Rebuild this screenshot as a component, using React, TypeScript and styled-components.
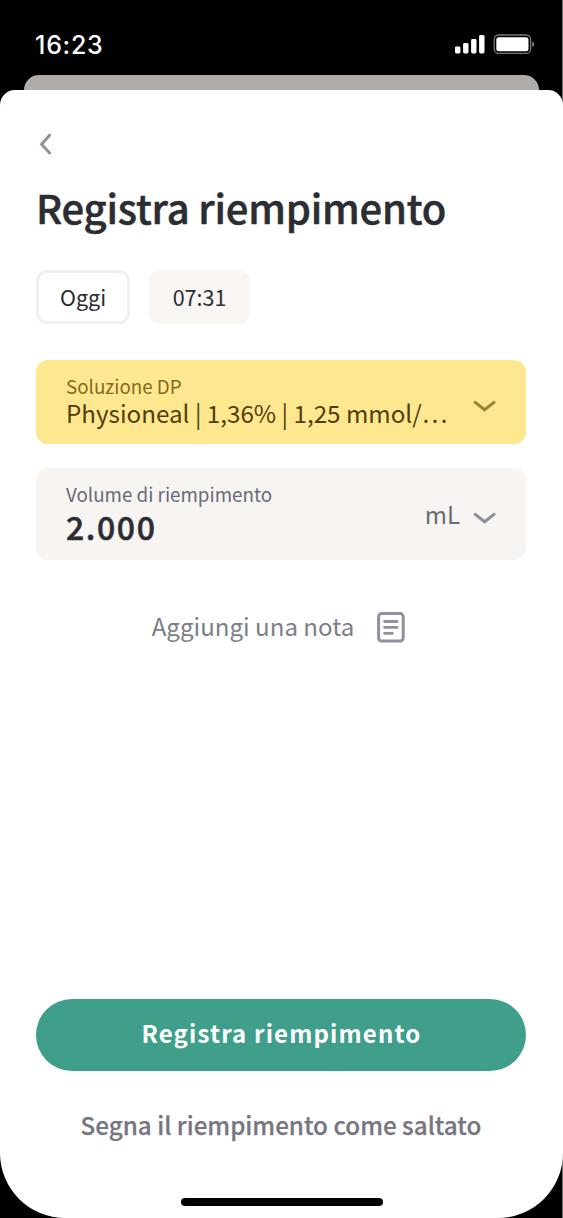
import React from "react";
import styled, { createGlobalStyle } from "styled-components";

const GlobalStyle = createGlobalStyle`
  * { box-sizing: border-box; }
  body { margin: 0; background: #000; }
  button { border: 0; margin: 0; padding: 0; background: none; font: inherit; color: inherit; }
`;

const Screen = styled.div`
  width: 563px;
  height: 1218px;
  display: flex;
  flex-direction: column;
  background: linear-gradient(to right, #000 562px, #6e6e6e 562px);
  overflow: hidden;
  font-family: "Noto Sans CJK SC", "Noto Sans", sans-serif;
  color: #2b2d33;
`;

const StatusBar = styled.header`
  height: 75px;
  flex: none;
  display: flex;
  align-items: flex-start;
  justify-content: space-between;
  padding: 30px 28px 0 35px;
`;

const Clock = styled.time`
  font: 500 25px/31px Inter, sans-serif;
  letter-spacing: 0.75px;
  color: #fff;
`;

const StatusIcons = styled.svg`
  display: block;
  margin-top: 4px;
`;

const BackSheet = styled.div`
  height: 15px;
  flex: none;
  margin: 0 24.5px 0 24px;
  border-radius: 15px 15px 0 0;
  background: #afacaa;
`;

const Sheet = styled.main`
  flex: 1;
  display: flex;
  flex-direction: column;
  padding: 43px 37px 0 36px;
  border-radius: 15px 15px 65px 65px;
  background: #fff;
`;

const BackButton = styled.button`
  width: 20px;
  height: 22px;
  display: block;
`;

const Title = styled.h1`
  margin: 28px 0 0;
  font-size: 40px;
  line-height: 48px;
  font-weight: 500;
  letter-spacing: -0.2px;
  -webkit-text-stroke: 0.5px currentColor;
  white-space: nowrap;
`;

const ChipRow = styled.div`
  display: flex;
  gap: 19px;
  margin-top: 39px;
`;

const Chip = styled.button<{ $filled?: boolean; $width: number }>`
  width: ${(p) => p.$width}px;
  height: 54px;
  border: 3px solid ${(p) => (p.$filled ? "#f8f5f2" : "#f1f0f0")};
  border-radius: 11px;
  background: ${(p) => (p.$filled ? "#f8f5f2" : "#fff")};
  font-size: 21.5px;
  line-height: 48px;
`;

const Field = styled.section<{ $tone: "yellow" | "neutral" }>`
  display: flex;
  align-items: center;
  justify-content: space-between;
  padding: 0 30px;
  border-radius: 12px;
  height: ${(p) => (p.$tone === "yellow" ? 84 : 92)}px;
  margin-top: ${(p) => (p.$tone === "yellow" ? 36 : 24)}px;
  background: ${(p) => (p.$tone === "yellow" ? "#fee88f" : "#f7f4f2")};
  color: ${(p) => (p.$tone === "yellow" ? "#543c0c" : "#2b2d33")};
`;

const FieldText = styled.div<{ $lift?: number }>`
  display: flex;
  flex-direction: column;
  padding-bottom: ${(p) => p.$lift ?? 0}px;
`;

const Label = styled.span<{ $color: string }>`
  font-size: 18.8px;
  line-height: 24px;
  white-space: nowrap;
  color: ${(p) => p.$color};
`;

const Solution = styled.span`
  font-size: 24.2px;
  line-height: 30px;
  white-space: nowrap;
`;

const Volume = styled.span`
  font-size: 32px;
  line-height: 40px;
  font-weight: 500;
  letter-spacing: 1.6px;
  -webkit-text-stroke: 0.5px currentColor;
`;

const Unit = styled.div`
  display: flex;
  align-items: center;
  gap: 13px;
  font-size: 24px;
  line-height: 30px;
  color: #696a78;
`;

const NoteButton = styled.button`
  display: flex;
  align-items: center;
  justify-content: center;
  gap: 23px;
  height: 36px;
  margin-top: 49px;
  padding-right: 5px;
  padding-bottom: 2px;
  font-size: 24.1px;
  line-height: 34px;
  color: #7d7e88;
  white-space: nowrap;
`;

const NoteIcon = styled.svg`
  display: block;
  margin-top: 2px;
`;

const Actions = styled.footer`
  display: flex;
  flex-direction: column;
  align-items: center;
  margin-top: auto;
`;

const PrimaryButton = styled.button`
  width: 100%;
  height: 72px;
  padding: 0 0 5px 1px;
  border-radius: 36px;
  background: #3f9f8a;
  color: #fff;
  font-size: 24px;
  line-height: 67px;
  font-weight: 700;
  letter-spacing: 1.15px;
`;

const SkipButton = styled.button`
  margin-top: 36px;
  font-size: 24.2px;
  line-height: 36px;
  font-weight: 500;
  color: #777681;
  -webkit-text-stroke: 0.25px currentColor;
  white-space: nowrap;
`;

const HomeIndicator = styled.div`
  width: 202px;
  height: 8px;
  margin: 55px 0 12px 2px;
  border-radius: 4px;
  background: #000;
`;

const ChevronIcon = styled.svg`
  display: block;
  flex: none;
  margin-top: 8px;
`;

const Chevron = ({ color }: { color: string }) => (
  <ChevronIcon width="23" height="13" viewBox="0 0 23 13" fill="none">
    <path d="M2.2 2.4 L11.6 9.8 L21 2.4" stroke={color} strokeWidth="3" strokeLinecap="round" />
  </ChevronIcon>
);

export default function App() {
  return (
    <Screen>
      <GlobalStyle />
      <StatusBar>
        <Clock>16:23</Clock>
        <StatusIcons width="80" height="21" viewBox="0 0 80 21" fill="#fff">
          <rect x="0" y="12.5" width="5.4" height="7" rx="1.4" />
          <rect x="8.1" y="9" width="5.4" height="10.5" rx="1.4" />
          <rect x="16.1" y="5" width="5.4" height="14.5" rx="1.4" />
          <rect x="24.1" y="1" width="5.4" height="18.5" rx="1.4" />
          <rect x="39.2" y="1" width="36.4" height="18.4" rx="4.5" fill="none" stroke="#777" strokeWidth="1.3" />
          <rect x="41.3" y="3.2" width="32.2" height="14" rx="2.5" />
          <path d="M77.2 7.2 a3.2 3.2 0 0 1 0 6 Z" fill="#777" />
        </StatusIcons>
      </StatusBar>
      <BackSheet />
      <Sheet>
        <BackButton aria-label="Indietro">
          <svg width="20" height="22" viewBox="0 0 20 22" fill="none">
            <path d="M13.6 2.2 L5.6 11.2 L13.6 20" stroke="#919196" strokeWidth="2.9" strokeLinecap="round" />
          </svg>
        </BackButton>
        <Title>Registra riempimento</Title>
        <ChipRow>
          <Chip $width={94}>Oggi</Chip>
          <Chip $width={101} $filled>07:31</Chip>
        </ChipRow>
        <Field $tone="yellow">
          <FieldText $lift={2}>
            <Label $color="#86691f">Soluzione DP</Label>
            <Solution>Physioneal | 1,36% | 1,25 mmol/…</Solution>
          </FieldText>
          <Chevron color="#9c822f" />
        </Field>
        <Field $tone="neutral">
          <FieldText>
            <Label $color="#696a78">Volume di riempimento</Label>
            <Volume>2.000</Volume>
          </FieldText>
          <Unit>
            mL
            <Chevron color="#8e8d98" />
          </Unit>
        </Field>
        <NoteButton>
          Aggiungi una nota
          <NoteIcon width="28" height="31" viewBox="0 0 28 31" fill="none" stroke="#9190a0" strokeLinecap="round">
            <rect x="1.6" y="1.6" width="24.6" height="27.4" rx="3" strokeWidth="3" />
            <path d="M7.6 9.5 H20 M7.6 15.4 H20 M7.6 21.3 H15.5" strokeWidth="2.8" />
          </NoteIcon>
        </NoteButton>
        <Actions>
          <PrimaryButton>Registra riempimento</PrimaryButton>
          <SkipButton>Segna il riempimento come saltato</SkipButton>
          <HomeIndicator />
        </Actions>
      </Sheet>
    </Screen>
  );
}
